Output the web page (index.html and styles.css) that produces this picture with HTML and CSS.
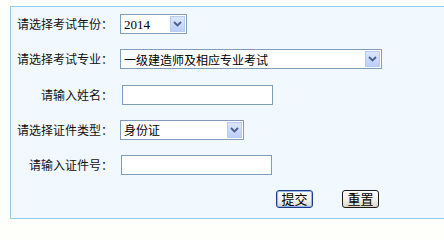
FILE: index.html
```html
<!DOCTYPE html>
<html lang="zh-CN">
<head>
<meta charset="utf-8">
<title>考试查询</title>
<link rel="stylesheet" href="styles.css">
</head>
<body>
<form class="panel">
  <div class="row row-1">
    <label class="lbl">请选择考试年份：</label>
    <div class="sel sel-year">
      <select><option>2014</option></select>
      <span class="arrow"><svg width="9" height="6" viewBox="0 0 9 6"><path d="M1 1 L4.5 4.5 L8 1" fill="none" stroke="#4a5f8c" stroke-width="1.8"/></svg></span>
    </div>
  </div>
  <div class="row row-2">
    <label class="lbl">请选择考试专业：</label>
    <div class="sel sel-major">
      <select><option>一级建造师及相应专业考试</option></select>
      <span class="arrow"><svg width="9" height="6" viewBox="0 0 9 6"><path d="M1 1 L4.5 4.5 L8 1" fill="none" stroke="#4a5f8c" stroke-width="1.8"/></svg></span>
    </div>
  </div>
  <div class="row">
    <label class="lbl">请输入姓名：</label>
    <input class="txt" type="text">
  </div>
  <div class="row">
    <label class="lbl">请选择证件类型：</label>
    <div class="sel sel-id">
      <select><option>身份证</option></select>
      <span class="arrow"><svg width="9" height="6" viewBox="0 0 9 6"><path d="M1 1 L4.5 4.5 L8 1" fill="none" stroke="#4a5f8c" stroke-width="1.8"/></svg></span>
    </div>
  </div>
  <div class="row">
    <label class="lbl">请输入证件号：</label>
    <input class="txt txt-id" type="text">
  </div>
  <div class="row-btn">
    <button type="button" class="btn btn-submit">提交</button>
    <button type="reset" class="btn">重置</button>
  </div>
</form>
</body>
</html>
```

FILE: styles.css
```css
html, body {
  margin: 0;
  padding: 0;
  background: #fefefb;
  font-family: "Noto Sans CJK SC", "Liberation Sans", sans-serif;
  font-size: 12px;
  color: #111;
}

.panel {
  margin: 6px 0 0 10px;
  height: 211px;
  background: #f1f9fe;
  border-top: 1px solid #8fd0ee;
  border-left: 1px solid #9cc4da;
  border-bottom: 1px solid #8fd0ee;
  display: flex;
  flex-direction: column;
}

.row {
  height: 35px;
  flex: none;
  display: flex;
  align-items: center;
}

.row-1 { height: 34px; }
.row-2 { height: 36px; }

.lbl {
  width: 102px;
  text-align: right;
  white-space: nowrap;
  margin-right: 7px;
  line-height: 14px;
}

.sel {
  position: relative;
  height: 20px;
  box-sizing: border-box;
  border: 1px solid #7f9db9;
  background: #fff;
}

.sel select {
  -webkit-appearance: none;
  appearance: none;
  border: 0;
  outline: 0;
  background: transparent;
  width: 100%;
  height: 100%;
  padding: 0 0 0 3px;
  margin: 0;
  font-family: "Noto Sans CJK SC", "Liberation Sans", sans-serif;
  font-size: 12px;
  color: #000;
}

.sel-year { width: 67px; }
.sel-year select { font-family: "Liberation Serif", "Noto Sans CJK SC", serif; font-size: 13px; }
.sel-major { width: 262px; }
.sel-id { width: 124px; }

.arrow {
  position: absolute;
  top: 1px;
  right: 1px;
  bottom: 1px;
  width: 15px;
  box-sizing: border-box;
  border: 1px solid #b9cbef;
  background: linear-gradient(#dbe6fd, #bccffa);
  display: flex;
  align-items: center;
  justify-content: center;
  pointer-events: none;
}

.txt {
  width: 151px;
  height: 20px;
  box-sizing: border-box;
  border: 1px solid #7f9db9;
  background: #fff;
  margin: 0 0 0 2px;
  padding: 0 2px;
}

.txt-id {
  margin-left: 1px;
}

.row-btn {
  display: flex;
  padding: 8px 0 0 265px;
}

.btn {
  width: 37px;
  height: 18px;
  margin: 0 29px 0 0;
  padding: 0;
  border: 1px solid #1c1c1c;
  border-radius: 3px;
  background: linear-gradient(#ffffff, #f0efe8 60%, #d8d6cc);
  font-family: "Noto Sans CJK SC", sans-serif;
  font-size: 13px;
  line-height: 16px;
  color: #000;
}

.btn-submit {
  border-color: #1b3c8a;
  box-shadow: inset 0 0 0 1px #98b4e8;
}
```
